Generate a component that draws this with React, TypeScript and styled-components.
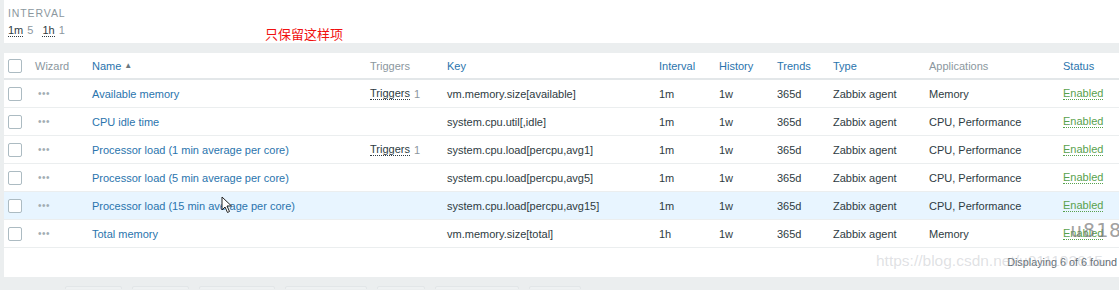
import React from "react";
import styled, { createGlobalStyle } from "styled-components";

type Item = {
  name: string;
  triggers?: number;
  key: string;
  interval: string;
  history: string;
  trends: string;
  type: string;
  apps: string;
  hover?: boolean;
};

const items: Item[] = [
  { name: "Available memory", triggers: 1, key: "vm.memory.size[available]", interval: "1m", history: "1w", trends: "365d", type: "Zabbix agent", apps: "Memory" },
  { name: "CPU idle time", key: "system.cpu.util[,idle]", interval: "1m", history: "1w", trends: "365d", type: "Zabbix agent", apps: "CPU, Performance" },
  { name: "Processor load (1 min average per core)", triggers: 1, key: "system.cpu.load[percpu,avg1]", interval: "1m", history: "1w", trends: "365d", type: "Zabbix agent", apps: "CPU, Performance" },
  { name: "Processor load (5 min average per core)", key: "system.cpu.load[percpu,avg5]", interval: "1m", history: "1w", trends: "365d", type: "Zabbix agent", apps: "CPU, Performance" },
  { name: "Processor load (15 min average per core)", key: "system.cpu.load[percpu,avg15]", interval: "1m", history: "1w", trends: "365d", type: "Zabbix agent", apps: "CPU, Performance", hover: true },
  { name: "Total memory", key: "vm.memory.size[total]", interval: "1h", history: "1w", trends: "365d", type: "Zabbix agent", apps: "Memory" },
];

const footerButtons = [55, 55, 74, 80, 46, 82, 50];

const App = () => (
  <>
    <GlobalStyle />
    <Page>
      <FilterPanel>
        <FilterLabel>Interval</FilterLabel>
        <FilterValues>
          <Tag>1m</Tag>
          <Count>5</Count>
          <Tag>1h</Tag>
          <Count>1</Count>
        </FilterValues>
        <Note>只保留这样项</Note>
      </FilterPanel>

      <ListPanel>
        <HeaderRow>
          <Cell><Checkbox /></Cell>
          <HeadText>Wizard</HeadText>
          <HeadLink>
            Name <SortArrow>▲</SortArrow>
          </HeadLink>
          <HeadText>Triggers</HeadText>
          <HeadLink>Key</HeadLink>
          <HeadLink>Interval</HeadLink>
          <HeadLink>History</HeadLink>
          <HeadLink>Trends</HeadLink>
          <HeadLink>Type</HeadLink>
          <HeadText>Applications</HeadText>
          <HeadLink>Status</HeadLink>
        </HeaderRow>

        {items.map((it) => (
          <Row key={it.name} $hover={it.hover}>
            <Cell><Checkbox /></Cell>
            <Cell><Dots>•••</Dots></Cell>
            <NameLink>{it.name}</NameLink>
            <Cell>
              {it.triggers ? (
                <>
                  <Dotted>Triggers</Dotted>
                  <Count>{it.triggers}</Count>
                </>
              ) : null}
            </Cell>
            <Cell>{it.key}</Cell>
            <Cell>{it.interval}</Cell>
            <Cell>{it.history}</Cell>
            <Cell>{it.trends}</Cell>
            <Cell>{it.type}</Cell>
            <Cell>{it.apps}</Cell>
            <Cell><Status>Enabled</Status></Cell>
          </Row>
        ))}

        <Footer>Displaying 6 of 6 found</Footer>

        <Cursor width="12" height="18" viewBox="0 0 12 18">
          <path d="M1 1 L1 14 L4 11 L6.5 16.5 L8.5 15.5 L6 10 L10.5 10 Z" fill="#fff" stroke="#222" strokeWidth="1" strokeLinejoin="round" />
        </Cursor>
        <Stamp>u818</Stamp>
        <Watermark>https://blog.csdn.net/u011192615</Watermark>
      </ListPanel>

      <ButtonBar>
        {footerButtons.map((w, i) => (
          <GhostButton key={i} style={{ width: w }} />
        ))}
      </ButtonBar>
    </Page>
  </>
);

export default App;

const GlobalStyle = createGlobalStyle`
  html, body {
    margin: 0;
    padding: 0;
    background: #ebeeef;
    overflow: hidden;
  }
  body {
    font-family: "Liberation Sans", Arial, sans-serif;
    font-size: 11px;
    color: #2e3b42;
  }
`;

const Page = styled.div`
  width: 1119px;
  height: 290px;
  padding-left: 4px;
  box-sizing: border-box;
  overflow: hidden;
`;

const FilterPanel = styled.div`
  position: relative;
  height: 43px;
  background: #fff;
  padding: 7px 0 0 4px;
  box-sizing: border-box;
`;

const FilterLabel = styled.div`
  font-size: 10.5px;
  text-transform: uppercase;
  letter-spacing: 0.9px;
  color: #8b979e;
  line-height: 12px;
`;

const FilterValues = styled.div`
  display: flex;
  align-items: baseline;
  margin-top: 4px;
  line-height: 14px;
`;

const Tag = styled.span`
  color: #2e3b42;
  border-bottom: 1px dotted #2e3b42;
  line-height: 12px;
`;

const Count = styled.span`
  color: #8b979e;
  margin-left: 4px;
  margin-right: 9px;
`;

const Note = styled.div`
  position: absolute;
  left: 261px;
  top: 26px;
  color: #f01010;
  font-family: "Noto Sans CJK SC", sans-serif;
  font-size: 13px;
  line-height: 16px;
`;

const ListPanel = styled.div`
  position: relative;
  margin-top: 10px;
  background: #fff;
  height: 224px;
`;

const Grid = styled.div`
  display: grid;
  grid-template-columns: 27px 57px 278px 77px 212px 60px 58px 56px 96px 134px 1fr;
  align-items: center;
  padding-left: 4px;
`;

const HeaderRow = styled(Grid)`
  height: 25px;
  border-bottom: 2px solid #e3e7e9;
`;

const Row = styled(Grid)<{ $hover?: boolean }>`
  height: 27px;
  border-bottom: 1px solid #ebeeef;
  background: ${(p) => (p.$hover ? "#e8f5ff" : "#fff")};
`;

const Cell = styled.div`
  white-space: nowrap;
  display: flex;
  align-items: center;
`;

const HeadText = styled(Cell)`
  color: #8b979e;
`;

const HeadLink = styled(Cell)`
  color: #2a74ad;
`;

const SortArrow = styled.span`
  color: #6b777e;
  font-size: 8px;
  margin-left: 3px;
`;

const Checkbox = styled.span`
  display: inline-block;
  width: 12px;
  height: 12px;
  border: 1px solid #acbbc2;
  border-radius: 2px;
  background: #fff;
`;

const Dots = styled.span`
  color: #a2adb3;
  font-size: 10px;
  letter-spacing: 0.5px;
  padding-left: 3px;
`;

const NameLink = styled(Cell)`
  color: #2a74ad;
`;

const Dotted = styled.span`
  border-bottom: 1px dotted #2e3b42;
  line-height: 12px;
`;

const Status = styled.span`
  color: #58a14d;
  border-bottom: 1px dotted #58a14d;
  line-height: 12px;
`;

const Footer = styled.div`
  height: 28px;
  display: flex;
  align-items: center;
  justify-content: flex-end;
  padding-right: 2px;
  color: #5f6b72;
  font-size: 10.8px;
`;

const Cursor = styled.svg`
  position: absolute;
  left: 217px;
  top: 143px;
`;

const Stamp = styled.div`
  position: absolute;
  left: 1066px;
  top: 165px;
  font-family: "DejaVu Sans Mono", monospace;
  font-size: 20px;
  color: rgba(120, 120, 120, 0.7);
  letter-spacing: 1px;
`;

const Watermark = styled.div`
  position: absolute;
  left: 872px;
  top: 199px;
  font-size: 15.5px;
  color: rgba(175, 180, 186, 0.4);
  white-space: nowrap;
  pointer-events: none;
`;

const ButtonBar = styled.div`
  display: flex;
  gap: 10px;
  height: 3px;
  overflow: hidden;
  padding: 9px 0 0 61px;
`;

const GhostButton = styled.div`
  flex: none;
  height: 20px;
  border: 1px solid #e2e6e8;
  border-radius: 2px;
  background: #eef1f2;
`;
